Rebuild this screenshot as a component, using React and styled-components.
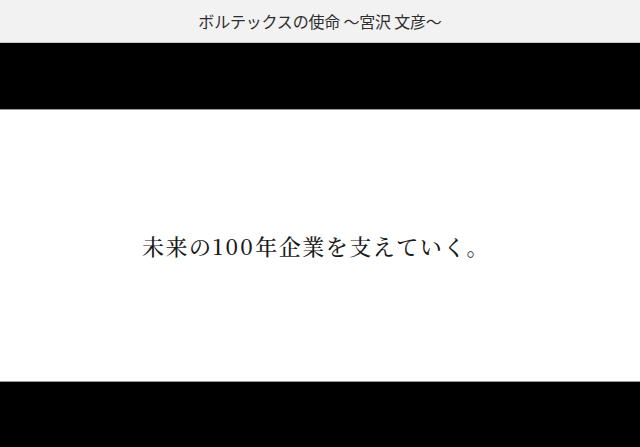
import React from "react";
import styled, { createGlobalStyle } from "styled-components";

const GlobalStyle = createGlobalStyle`
    html, body {
        margin: 0;
        padding: 0;
        background: #000;
    }
`

const Page = styled.div`
    width: 640px;
    height: 447px;
    display: flex;
    flex-direction: column;
    overflow: hidden;
`

const Header = styled.header`
    height: 42px;
    flex: none;
    background-color: #f2f2f2;
    border-bottom: 1px solid #c8c8c8;
    display: flex;
    justify-content: center;
    align-items: center;
`

const Title = styled.h1`
    margin: 0;
    font-family: "Noto Sans CJK JP", "Noto Sans", sans-serif;
    font-weight: 400;
    font-size: 16px;
    letter-spacing: -0.2px;
    color: #2e2e2e;
`

const Band = styled.div`
    height: ${props => props.height}px;
    flex: none;
    background-color: #000;
`

const Screen = styled.section`
    flex: 1;
    background-color: #fff;
    border-top: 1px solid #9a9a9a;
    border-bottom: 1px solid #9a9a9a;
    display: flex;
    justify-content: center;
    align-items: center;
`

const Catch = styled.p`
    margin: 0 8px 0 0;
    font-family: "Noto Serif CJK JP", "Noto Serif JP", "IPAMincho", "Liberation Serif", "Noto Sans CJK JP", serif;
    font-size: 22px;
    font-weight: 500;
    letter-spacing: 1.5px;
    color: #1a1a1a;
`

const Digits = styled.span`
    letter-spacing: 2.5px;
`

export default function App() {
    return (
        <>
            <GlobalStyle />
            <Page>
                <Header>
                    <Title>ボルテックスの使命 〜宮沢 文彦〜</Title>
                </Header>
                <Band height={66} />
                <Screen>
                    <Catch>未来の<Digits>100</Digits>年企業を支えていく。</Catch>
                </Screen>
                <Band height={65} />
            </Page>
        </>
    )
}
